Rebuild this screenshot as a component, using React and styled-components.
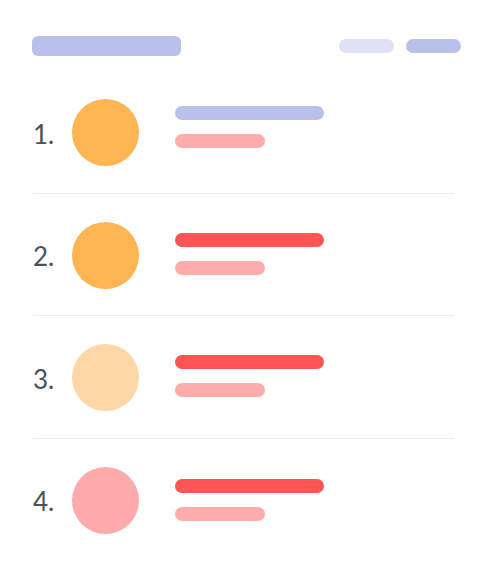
import React from "react";
import styled, { createGlobalStyle } from "styled-components";

const GlobalStyle = createGlobalStyle`
  body {
    margin: 0;
    background: #ffffff;
    font-family: "Lato", "Open Sans", sans-serif;
  }
`;

const Page = styled.div`
  width: 487px;
  height: 585px;
  box-sizing: border-box;
  padding: 36px 26px 0 32px;
`;

const Header = styled.div`
  display: flex;
  align-items: center;
  justify-content: space-between;
`;

const TitleBar = styled.div`
  width: 149px;
  height: 20px;
  border-radius: 6px;
  background: #b9c1ea;
`;

const Pills = styled.div`
  display: flex;
  gap: 12px;
`;

const Pill = styled.div`
  width: 55px;
  height: 14px;
  border-radius: 7px;
  background: ${(p) => (p.$active ? "#b9c1ea" : "#dfe2f5")};
`;

const List = styled.div`
  margin-top: 15px;
  margin-left: 1px;
  width: 421px;
`;

const Row = styled.div`
  display: flex;
  align-items: center;
  padding: 28px 0 26.5px;
  border-bottom: 1px solid ${(p) => (p.$last ? "transparent" : "#eaecf0")};
`;

const Rank = styled.div`
  width: 39px;
  font-size: 26px;
  font-weight: 400;
  color: #46525e;
  line-height: 1;
  padding-top: 2px;
`;

const Avatar = styled.div`
  width: 67px;
  height: 67px;
  border-radius: 50%;
  background: ${(p) => p.$color};
`;

const Lines = styled.div`
  display: flex;
  flex-direction: column;
  gap: 14px;
  margin-left: 36px;
  align-self: flex-start;
  margin-top: ${(p) => p.$offset}px;
`;

const Line = styled.div`
  width: ${(p) => p.$w}px;
  height: 14px;
  border-radius: 7px;
  background: ${(p) => p.$color};
`;

const rows = [
  { n: "1.", avatar: "#ffb552", top: "#b9c1ea", offset: 7 },
  { n: "2.", avatar: "#ffb552", top: "#ff5555", offset: 11 },
  { n: "3.", avatar: "#ffd6a6", top: "#ff5555", offset: 11 },
  { n: "4.", avatar: "#ffabab", top: "#ff5555", offset: 12 },
];

export default function App() {
  return (
    <>
      <GlobalStyle />
      <Page>
        <Header>
          <TitleBar />
          <Pills>
            <Pill />
            <Pill $active />
          </Pills>
        </Header>
        <List>
          {rows.map((r, i) => (
            <Row key={r.n} $last={i === rows.length - 1}>
              <Rank>{r.n}</Rank>
              <Avatar $color={r.avatar} />
              <Lines $offset={r.offset}>
                <Line $w={149} $color={r.top} />
                <Line $w={90} $color="#ffacac" />
              </Lines>
            </Row>
          ))}
        </List>
      </Page>
    </>
  );
}
